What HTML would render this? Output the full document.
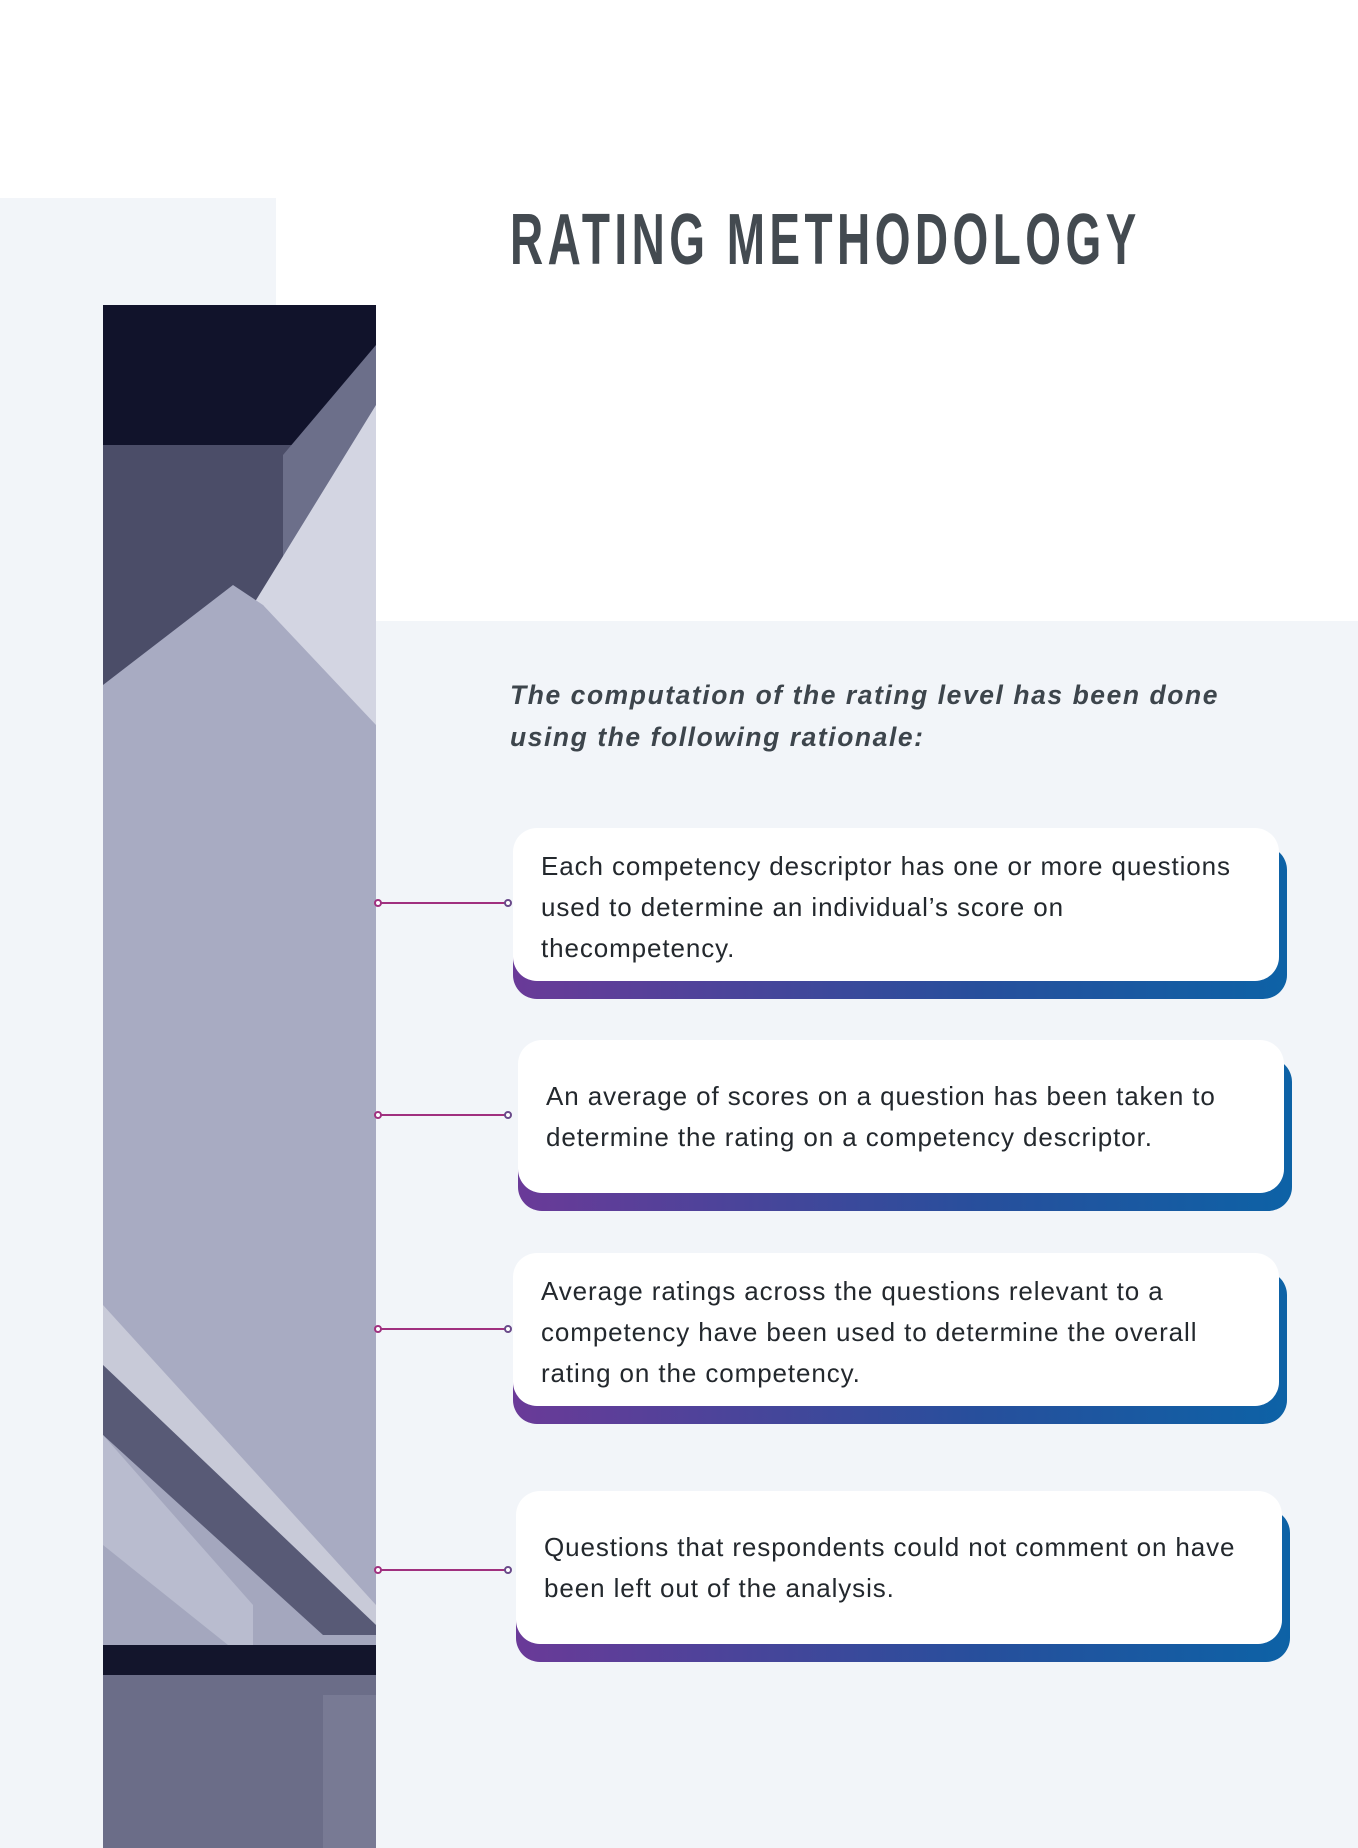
<!DOCTYPE html>
<html><head><meta charset="utf-8"><style>
*{margin:0;padding:0;box-sizing:border-box}
body{width:1358px;height:1848px;position:relative;background:#fff;overflow:hidden;font-family:"Liberation Sans",sans-serif}
.lp{position:absolute;left:0;top:198px;width:276px;height:1650px;background:#f2f5f9}
.bp{position:absolute;left:376px;top:621px;width:982px;height:1227px;background:#f2f5f9}
.img{position:absolute;left:103px;top:305px;width:273px;height:1543px}
h1{position:absolute;left:510px;top:200px;font-size:72px;font-weight:bold;color:#434a50;letter-spacing:7px;transform:scaleX(0.638);transform-origin:left top;white-space:nowrap;line-height:80px}
.sub{position:absolute;left:510px;top:674px;font-size:27px;font-weight:bold;font-style:italic;color:#3d454c;letter-spacing:1.6px;line-height:42px;transform:scaleX(0.98);transform-origin:left top;white-space:nowrap}
.card{position:absolute;width:766px;height:153px}
.card .sh{position:absolute;left:0;top:18px;right:-8px;bottom:-18px;border-radius:24px;background:linear-gradient(90deg,#6a3a98,#274f9c 60%,#0d62a6)}
.card .fr{position:absolute;inset:0;background:#fff;border-radius:24px;padding:18px 28px;font-size:26px;line-height:41px;color:#23282d;letter-spacing:0.9px;white-space:nowrap}
.conn{position:absolute;left:376px;height:2px;width:132px;background:#a0307f}
.conn:before,.conn:after{content:"";position:absolute;top:-3px;width:4px;height:4px;border:2px solid #a0307f;border-radius:50%;background:#fff}
.conn:before{left:-2px}.conn:after{right:-4px;border-color:#6a4a8a}
</style></head><body>
<div class="lp"></div>
<div class="bp"></div>
<svg class="img" viewBox="0 0 273 1543" preserveAspectRatio="none">
<rect width="273" height="1543" fill="#a4a7be"/>
<rect width="273" height="150" fill="#11132b"/>
<rect y="140" width="273" height="260" fill="#4b4d68"/>
<polygon points="180,150 273,40 273,200 230,260 180,260" fill="#6c6f8a"/>
<polygon points="150,300 273,100 273,600 160,300" fill="#d3d5e2"/>
<polygon points="0,380 130,280 160,300 273,420 273,1300 0,1000" fill="#a8abc2"/>
<polygon points="0,1000 273,1300 273,1320 0,1060" fill="#c8cad8"/>
<polygon points="0,1060 273,1320 273,1330 220,1330 0,1130" fill="#585a76"/>
<polygon points="0,1130 150,1300 150,1360 0,1240" fill="#b9bccf"/>
<rect x="0" y="1340" width="273" height="30" fill="#13152c"/>
<rect x="0" y="1370" width="273" height="173" fill="#6b6d88"/>
<rect x="220" y="1390" width="53" height="153" fill="#787a94"/>
</svg>
<h1>RATING METHODOLOGY</h1>
<div class="sub">The computation of the rating level has been done<br>using the following rationale:</div>

<div class="conn" style="top:902px"></div>
<div class="card" style="left:513px;top:828px"><div class="sh"></div><div class="fr">Each competency descriptor has one or more questions<br>used to determine an individual’s score on<br>thecompetency.</div></div>

<div class="conn" style="top:1114px"></div>
<div class="card" style="left:518px;top:1040px"><div class="sh"></div><div class="fr" style="padding-top:36px">An average of scores on a question has been taken to<br>determine the rating on a competency descriptor.</div></div>

<div class="conn" style="top:1328px"></div>
<div class="card" style="left:513px;top:1253px"><div class="sh"></div><div class="fr">Average ratings across the questions relevant to a<br>competency have been used to determine the overall<br>rating on the competency.</div></div>

<div class="conn" style="top:1569px"></div>
<div class="card" style="left:516px;top:1491px"><div class="sh"></div><div class="fr" style="padding-top:36px">Questions that respondents could not comment on have<br>been left out of the analysis.</div></div>
</body></html>
